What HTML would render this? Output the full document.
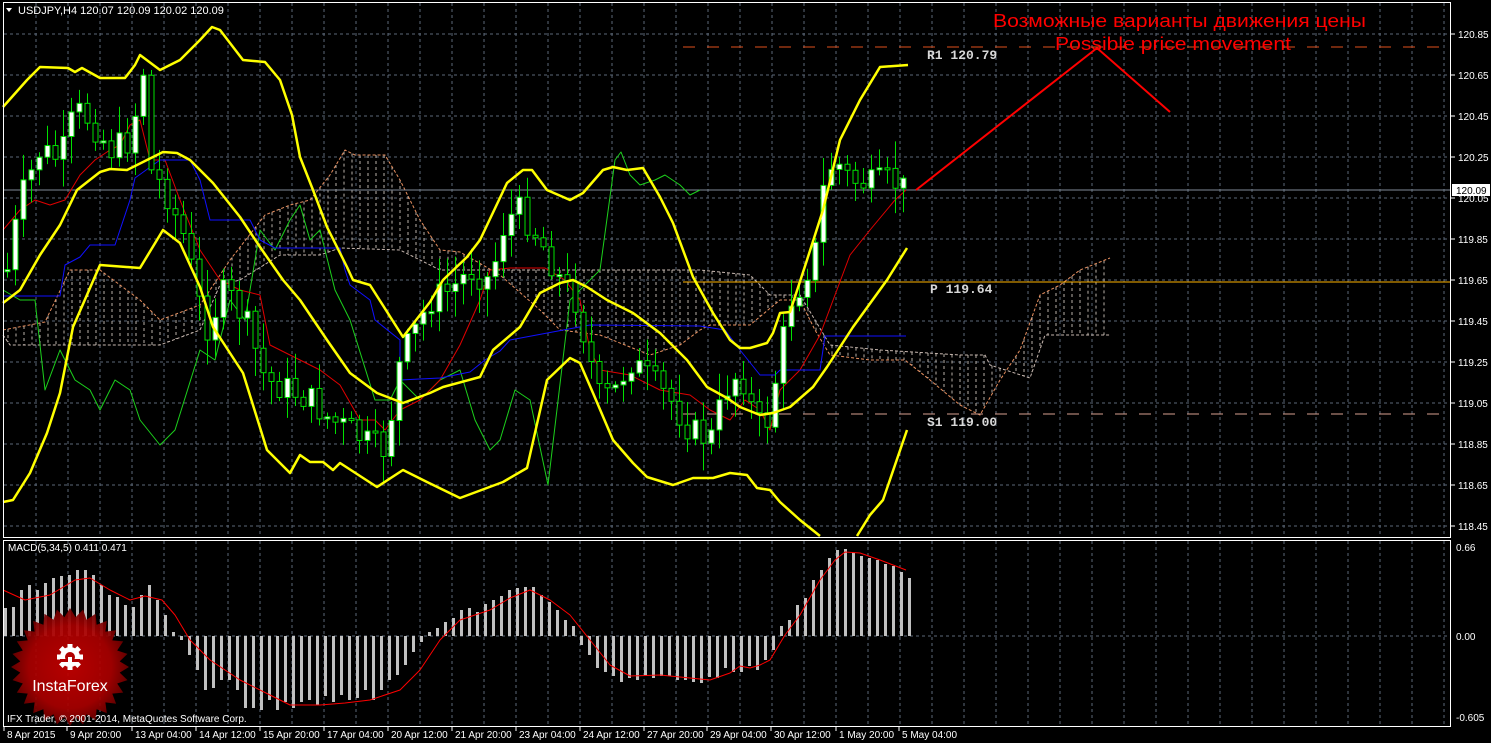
<!DOCTYPE html>
<html><head><meta charset="utf-8"><style>
html,body{margin:0;padding:0;background:#000;width:1491px;height:743px;overflow:hidden}
svg{display:block}
text{font-family:"Liberation Sans",sans-serif}
</style></head><body>
<svg id="s" width="1491" height="743" xmlns="http://www.w3.org/2000/svg">
<rect width="1491" height="743" fill="#000"/>
<g id="grid"></g>
<g id="cloud"></g>
<line x1="683" y1="47" x2="1450" y2="47" stroke="#e0501c" stroke-width="1" stroke-dasharray="12,12"/>
<line x1="683" y1="282" x2="1450" y2="282" stroke="#ffb400" stroke-width="1"/>
<line x1="683" y1="414" x2="1450" y2="414" stroke="#d8a090" stroke-width="1" stroke-dasharray="12,12"/>
<line x1="3" y1="190" x2="1450" y2="190" stroke="#7f8a99" stroke-width="1"/>
<g id="lines"></g>
<g id="candles"></g>
<g id="bands"></g>
<g id="macd"></g>
<rect x="3.5" y="2.5" width="1447" height="535" fill="none" stroke="#fff"/>
<rect x="3.5" y="540.5" width="1447" height="186" fill="none" stroke="#fff"/>
<polygon points="6,8 12,8 9,12" fill="#fff"/>
<text x="18" y="14" fill="#fff" font-size="11">USDJPY,H4  120.07 120.09 120.02 120.09</text>
<text x="8" y="551" fill="#fff" font-size="10">MACD(5,34,5) 0.411 0.471</text>
<text x="993" y="27" fill="#f00" font-size="18" textLength="373" lengthAdjust="spacingAndGlyphs">Возможные варианты движения цены</text>
<text x="1055" y="50" fill="#f00" font-size="18" textLength="236" lengthAdjust="spacingAndGlyphs">Possible price movement</text>
<polyline points="916,190 1097,48 1170,112" fill="none" stroke="#f00" stroke-width="2"/>
<g style="font-family:'Liberation Mono',monospace;font-weight:bold" font-size="13" fill="#d8d8d8">
<text x="927" y="59" style="font-family:'Liberation Mono',monospace">R1 120.79</text>
<text x="930" y="293" style="font-family:'Liberation Mono',monospace">P 119.64</text>
<text x="927" y="426" style="font-family:'Liberation Mono',monospace">S1 119.00</text>
</g>
<g id="axis" font-size="10" fill="#fff"></g>
<rect x="1452" y="184" width="38" height="12" fill="#fff"/>
<text x="1456" y="194" font-size="10" fill="#000">120.09</text>
<g opacity="0.93">
<defs><radialGradient id="rg" cx="50%" cy="50%" r="50%"><stop offset="0" stop-color="#c40000"/><stop offset="0.7" stop-color="#a80000"/><stop offset="1" stop-color="#6a0000"/></radialGradient></defs>
<polygon id="star" fill="url(#rg)"/>
</g>
<g id="gear" fill="#fff"></g>
<text x="70" y="691" font-size="16" fill="#fff" text-anchor="middle">InstaForex</text>
<text x="7" y="722" font-size="10" fill="#fff">IFX Trader, © 2001-2014, MetaQuotes Software Corp.</text>
</svg>
<script>
(function(){
var NS="http://www.w3.org/2000/svg";
function el(p,t,a){var e=document.createElementNS(NS,t);for(var k in a)e.setAttribute(k,a[k]);p.appendChild(e);return e;}
function g(id){return document.getElementById(id);}
function pl(p,pts,col,w,extra){var a={points:pts.map(function(q){return q.join(",")}).join(" "),fill:"none",stroke:col,"stroke-width":w,"stroke-linejoin":"round"};for(var k in extra)a[k]=extra[k];return el(p,"polyline",a);}
function interp(pts,x){for(var i=0;i<pts.length-1;i++){if(x>=pts[i][0]&&x<=pts[i+1][0]){var t=(x-pts[i][0])/((pts[i+1][0]-pts[i][0])||1);return pts[i][1]+t*(pts[i+1][1]-pts[i][1]);}}return x<pts[0][0]?pts[0][1]:pts[pts.length-1][1];}
var G=g("grid");
for(var x=36;x<1450;x+=32){el(G,"line",{x1:x,y1:3,x2:x,y2:537,stroke:"#5c6878","stroke-dasharray":"3,3"});el(G,"line",{x1:x,y1:541,x2:x,y2:726,stroke:"#5c6878","stroke-dasharray":"3,3"});}
for(var y=34;y<537;y+=41){el(G,"line",{x1:4,y1:y,x2:1450,y2:y,stroke:"#5c6878","stroke-dasharray":"3,3"});}
el(G,"line",{x1:4,y1:636,x2:1450,y2:636,stroke:"#5c6878","stroke-dasharray":"3,3"});
var A=g("axis");var vals=["120.85","120.65","120.45","120.25","120.05","119.85","119.65","119.45","119.25","119.05","118.85","118.65","118.45"];
vals.forEach(function(v,i){var y=34+i*41;el(A,"line",{x1:1451,y1:y,x2:1455,y2:y,stroke:"#fff"});el(A,"text",{x:1458,y:y+4}).textContent=v;});
[["0.66",547],["0.00",636],["-0.605",717]].forEach(function(v){el(A,"text",{x:1456,y:v[1]+4}).textContent=v[0];});
var dl=[["8 Apr 2015",3],["9 Apr 20:00",66],["13 Apr 04:00",131],["14 Apr 12:00",195],["15 Apr 20:00",259],["17 Apr 04:00",323],["20 Apr 12:00",387],["21 Apr 20:00",451],["23 Apr 04:00",515],["24 Apr 12:00",579],["27 Apr 20:00",643],["29 Apr 04:00",706],["30 Apr 12:00",770],["1 May 20:00",835],["5 May 04:00",898]];
dl.forEach(function(d){el(A,"line",{x1:d[1]+1,y1:727,x2:d[1]+1,y2:731,stroke:"#fff"});el(A,"text",{x:d[1]+4,y:738}).textContent=d[0];});
var spanA=[[3,330],[45,322],[70,270],[100,270],[140,300],[160,320],[200,305],[230,260],[265,215],[290,205],[310,200],[330,175],[345,150],[355,155],[385,155],[400,180],[420,220],[440,250],[460,252],[500,275],[540,310],[560,330],[600,335],[650,355],[680,345],[700,330],[710,325],[750,325],[780,300],[800,300],[815,330],[830,355],[870,360],[905,360],[930,380],[960,405],[980,415],[1000,380],[1020,350],[1040,295],[1060,285],[1080,270],[1110,258]];
var spanB=[[3,335],[10,345],[160,345],[200,330],[220,285],[240,280],[280,255],[320,255],[340,248],[400,250],[440,270],[470,270],[700,270],[750,275],[770,295],[800,295],[830,345],[880,350],[960,355],[985,355],[990,365],[1030,378],[1045,335],[1110,335]];
var C=g("cloud");
for(var x=8;x<=1108;x+=8){var a=interp(spanA,x),b=interp(spanB,x);if(Math.abs(a-b)>3)el(C,"line",{x1:x,y1:Math.min(a,b),x2:x,y2:Math.max(a,b),stroke:"#b8b0a8","stroke-dasharray":"3,3","stroke-width":1});}
pl(C,spanA,"#e89060",1,{"stroke-dasharray":"3,2"});
pl(C,spanB,"#c8b8b0",1,{"stroke-dasharray":"3,2"});
var L=g("lines");
pl(L,[[3,290],[20,300],[35,300],[45,390],[60,350],[75,380],[90,390],[100,410],[115,380],[130,390],[140,420],[160,445],[175,430],[200,350],[215,360],[230,300],[245,320],[260,230],[275,250],[290,220],[300,205],[310,240],[320,230],[335,290],[350,320],[375,400],[390,400],[400,380],[420,400],[440,380],[460,370],[475,420],[490,450],[500,440],[515,390],[530,400],[548,485],[570,300],[580,290],[600,270],[615,160],[621,152],[630,175],[640,185],[655,180],[665,175],[680,185],[690,195],[700,190]],"#1cd01c",1);
pl(L,[[3,230],[20,210],[35,200],[50,205],[65,200],[80,175],[95,160],[110,150],[120,145],[130,125],[140,120],[150,160],[165,160],[180,200],[200,250],[220,280],[240,290],[260,295],[270,345],[300,360],[320,370],[340,385],[360,420],[375,420],[385,430],[400,410],[420,400],[440,380],[460,345],[480,300],[490,270],[510,268],[545,268],[565,280],[580,300],[590,350],[600,370],[630,375],[650,385],[660,390],[690,395],[710,410],[730,420],[745,400],[760,410],[770,430],[780,390],[800,370],[820,335],[850,255],[870,230],[895,200],[906,190]],"#e00000",1);
pl(L,[[3,296],[60,296],[65,265],[80,257],[90,245],[115,245],[130,200],[135,178],[160,160],[190,160],[200,180],[210,220],[250,220],[260,240],[275,248],[340,248],[345,270],[350,285],[370,300],[375,320],[400,340],[400,380],[440,378],[470,372],[485,360],[500,351],[510,340],[590,325],[700,326],[725,330],[740,350],[760,375],[775,375],[780,370],[820,370],[825,336],[906,336]],"#1010ff",1);
var close=[[7,270],[20,200],[40,150],[60,160],[75,110],[90,120],[110,150],[130,140],[145,60],[150,170],[165,190],[185,240],[205,330],[225,290],[245,320],[265,380],[290,390],[310,400],[330,420],[350,430],[370,445],[385,450],[400,360],[415,330],[430,300],[450,290],[470,270],[490,280],[505,220],[520,210],[540,240],[560,280],[575,300],[580,320],[600,400],[615,390],[630,360],[650,380],[670,400],[690,430],[710,440],[725,390],[740,370],[755,420],[765,430],[775,380],[790,300],[800,285],[815,250],[825,175],[835,160],[850,180],[870,185],[890,180],[906,190]];
var K=g("candles");var seed=7;function rnd(){seed=(seed*9301+49297)%233280;return seed/233280;}
var prv=interp(close,7);
for(var x=7;x<=906;x+=8){var c=interp(close,x)+(rnd()-0.5)*30;var o=prv;prv=c;var t1=Math.min(o,c),b1=Math.max(o,c);if(b1-t1<2)b1=t1+2;var hi=t1-rnd()*25-3,lw=b1+rnd()*25+3;
el(K,"line",{x1:x+0.5,y1:hi,x2:x+0.5,y2:lw,stroke:"#00e000"});
el(K,"rect",{x:x-2,y:t1,width:5,height:b1-t1,fill:(c<o?"#fff":"#000"),stroke:"#00e000"});}
var B=g("bands");
pl(B,[[3,107],[27,80],[40,67],[68,68],[75,72],[82,68],[100,78],[125,78],[135,65],[140,55],[160,70],[180,60],[200,40],[212,27],[220,30],[243,60],[265,62],[280,80],[292,115],[300,157],[313,190],[327,227],[347,267],[353,280],[370,285],[403,337],[430,302],[443,280],[467,257],[480,240],[507,183],[523,170],[532,170],[547,190],[570,200],[583,193],[603,170],[613,167],[627,170],[643,168],[660,197],[673,223],[693,277],[713,313],[730,340],[740,348],[750,348],[767,343],[773,333],[780,313],[790,312],[807,260],[823,210],[840,140],[860,100],[880,67],[908,65]],"#ffff00",2.5);
pl(B,[[3,303],[20,290],[40,255],[60,225],[77,190],[100,172],[110,169],[127,170],[147,160],[163,152],[177,153],[190,160],[213,183],[240,217],[260,247],[283,280],[300,300],[327,340],[350,373],[377,393],[403,403],[430,393],[443,387],[480,377],[493,350],[520,327],[540,293],[560,283],[573,280],[587,287],[607,300],[633,313],[660,333],[687,360],[707,387],[727,398],[740,407],[760,415],[773,413],[790,407],[813,387],[827,367],[853,327],[887,280],[907,248]],"#ffff00",2.5);
pl(B,[[3,502],[13,500],[30,473],[47,433],[60,393],[73,327],[100,265],[140,268],[163,230],[180,243],[200,287],[213,327],[243,373],[267,450],[290,473],[300,455],[310,462],[323,462],[333,470],[340,463],[377,487],[403,470],[427,482],[460,498],[503,482],[527,468],[547,380],[570,358],[580,363],[593,393],[613,440],[633,463],[647,477],[673,485],[693,478],[713,478],[730,473],[747,475],[757,488],[770,490],[780,502],[800,520],[820,536]],"#ffff00",2.5);
pl(B,[[857,536],[870,515],[883,500],[895,465],[907,430]],"#ffff00",2.5);
var M=g("macd");
var h=[608,607,590,585,590,583,578,576,575,570,570,575,585,595,597,605,607,595,585,600,615,632,640,655,670,690,688,680,680,690,708,708,710,700,710,702,708,702,700,705,696,702,695,700,698,690,700,690,680,675,665,652,642,632,628,622,618,610,608,612,604,600,596,590,588,587,587,595,602,610,620,626,645,655,668,672,676,682,678,680,676,678,676,676,680,680,682,683,677,678,668,672,672,666,670,660,650,626,620,605,598,580,570,558,550,549,553,556,558,560,564,566,572,578];
h.forEach(function(v,i){var x=4+i*8;el(M,"rect",{x:x,y:Math.min(v,636),width:3,height:Math.max(1,Math.abs(v-636)),fill:"#c0c0c0"});});
pl(M,[[3,590],[25,600],[50,595],[75,580],[90,578],[110,590],[130,600],[145,596],[162,600],[175,615],[190,640],[210,660],[240,680],[270,695],[290,705],[320,705],[345,703],[370,700],[400,690],[420,670],[440,640],[460,620],[490,610],[510,598],[530,590],[550,600],[570,615],[590,640],[610,665],[630,676],[660,675],[690,678],[710,680],[730,673],[740,666],[750,668],[760,665],[770,660],[785,635],[800,615],[820,580],[835,560],[845,552],[860,553],[880,560],[906,570]],"#ff0000",1);
var pts=[],n=28;for(var i=0;i<2*n;i++){var r=i%2?50:59,an=Math.PI*i/n;pts.push((70+r*Math.cos(an)).toFixed(1)+","+(667+r*Math.sin(an)).toFixed(1));}
g("star").setAttribute("points",pts.join(" "));
var GR=g("gear");
for(var i=0;i<8;i++){var an=Math.PI*i/4;el(GR,"rect",{x:67.5,y:644,width:5,height:6,transform:"rotate("+(an*180/Math.PI)+" 70 657)"});}
el(GR,"circle",{cx:70,cy:657,r:10});
el(GR,"circle",{cx:70,cy:657,r:5,fill:"#b00000"});
el(GR,"rect",{x:60,y:659,width:20,height:3,fill:"#b00000"});
el(GR,"rect",{x:68,y:657,width:4,height:13});
})();
</script>
</body></html>
